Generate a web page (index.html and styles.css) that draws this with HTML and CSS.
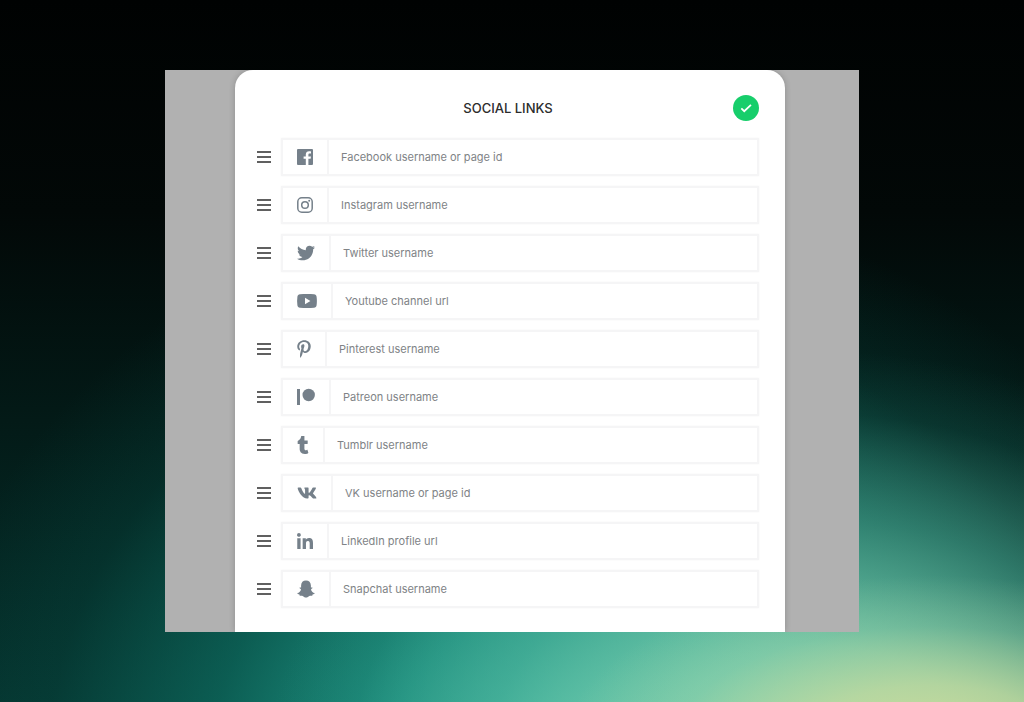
FILE: index.html
```html
<!DOCTYPE html>
<html lang="en">
  <head>
    <meta charset="UTF-8" />
    <meta name="viewport" content="width=device-width, initial-scale=1" />
    <title>Social Links</title>
    <link rel="stylesheet" href="styles.css">
  </head>
  <body>
    <main class="stage">
      <form class="card">
        <header class="card-header">
          <h1>SOCIAL LINKS</h1>
          <button type="submit" class="save" aria-label="Save">
            <svg viewBox="0 0 24 24"><path d="M4 12.500l5 5L20.500 6.500" /></svg>
          </button>
        </header>

        <ul class="links">
          <li class="link">
            <button type="button" class="handle" aria-label="Reorder"><span></span></button>
            <div class="field">
              <label for="facebook" aria-label="Facebook">
                <svg width="16" height="16" viewBox="0 0 16 16"><path d="M1 0h14a1 1 0 0 1 1 1v14a1 1 0 0 1-1 1h-3.600V9.800h2.200l.4-2.400h-2.600V5.900c0-.8.300-1.300 1.300-1.300H14V2.400c-.3 0-1-.1-1.900-.1-2 0-3.300 1.200-3.300 3.300v1.800H6.600v2.400h2.200V16H1a1 1 0 0 1-1-1V1a1 1 0 0 1 1-1z" /></svg>
              </label>
              <input id="facebook" type="text" placeholder="Facebook username or page id" />
            </div>
          </li>
          <li class="link">
            <button type="button" class="handle" aria-label="Reorder"><span></span></button>
            <div class="field">
              <label for="instagram" aria-label="Instagram">
                <svg width="16" height="16" viewBox="0 0 16 16"><g fill="none" stroke="currentColor" stroke-width="1.500"><rect x=".8" y=".8" width="14.400" height="14.400" rx="4" /><circle cx="8" cy="8" r="3.300" /></g><circle cx="12.200" cy="3.800" r="1" /></svg>
              </label>
              <input id="instagram" type="text" placeholder="Instagram username" />
            </div>
          </li>
          <li class="link">
            <button type="button" class="handle" aria-label="Reorder"><span></span></button>
            <div class="field">
              <label for="twitter" aria-label="Twitter">
                <svg width="18" height="18" viewBox="0 0 512 512"><path d="M459.370 151.716c.325 4.548.325 9.097.325 13.645 0 138.720-105.583 298.558-298.558 298.558-59.452 0-114.680-17.219-161.137-47.106 8.447.974 16.568 1.299 25.340 1.299 49.055 0 94.213-16.568 130.274-44.832-46.132-.975-84.792-31.188-98.112-72.772 6.498.974 12.995 1.624 19.818 1.624 9.421 0 18.843-1.300 27.614-3.573-48.081-9.747-84.143-51.980-84.143-102.985v-1.299c13.969 7.797 30.214 12.670 47.431 13.319-28.264-18.843-46.781-51.005-46.781-87.391 0-19.492 5.197-37.360 14.294-52.954 51.655 63.675 129.300 105.258 216.365 109.807-1.624-7.797-2.599-15.918-2.599-24.040 0-57.828 46.782-104.934 104.934-104.934 30.213 0 57.502 12.670 76.670 33.137 23.715-4.548 46.456-13.320 66.599-25.340-7.798 24.366-24.366 44.833-46.132 57.827 21.117-2.273 41.584-8.122 60.426-16.243-14.292 20.791-32.161 39.308-52.628 54.253z" /></svg>
              </label>
              <input id="twitter" type="text" placeholder="Twitter username" />
            </div>
          </li>
          <li class="link">
            <button type="button" class="handle" aria-label="Reorder"><span></span></button>
            <div class="field">
              <label for="youtube" aria-label="Youtube">
                <svg width="20" height="14" viewBox="0 0 20 14"><path fill-rule="evenodd" d="M3 .3C7 0 13 0 17 .3c1.500.1 2.400 1 2.600 2.400.4 3 .4 5.600 0 8.600-.2 1.400-1.100 2.300-2.600 2.400-4 .3-10 .3-14 0C1.500 13.600.6 12.700.4 11.300 0 8.300 0 5.700.4 2.700.6 1.300 1.500.4 3 .3zM8 3.800v6.400L13.400 7z" /></svg>
              </label>
              <input id="youtube" type="text" placeholder="Youtube channel url" />
            </div>
          </li>
          <li class="link">
            <button type="button" class="handle" aria-label="Reorder"><span></span></button>
            <div class="field">
              <label for="pinterest" aria-label="Pinterest">
                <svg width="14" height="18" viewBox="0 0 384 512"><path d="M204 6.500C101.400 6.500 0 74.900 0 185.600 0 256 39.600 296 63.600 296c9.900 0 15.600-27.600 15.600-35.400 0-9.300-23.700-29.100-23.700-67.800 0-80.400 61.200-137.400 140.400-137.400 68.100 0 118.500 38.700 118.500 109.800 0 53.100-21.300 152.700-90.300 152.700-24.900 0-46.200-18-46.200-43.800 0-37.800 26.400-74.400 26.400-113.400 0-66.200-93.900-54.200-93.900 25.800 0 16.800 2.100 35.400 9.600 50.700-13.800 59.400-42 147.900-42 209.100 0 18.900 2.700 37.500 4.500 56.400 3.400 3.800 1.700 3.400 6.900 1.500 50.400-69 48.600-82.500 71.400-172.800 12.300 23.400 44.100 36 69.300 36 106.200 0 153.900-103.500 153.900-196.800C384 71.300 298.200 6.500 204 6.500z" /></svg>
              </label>
              <input id="pinterest" type="text" placeholder="Pinterest username" />
            </div>
          </li>
          <li class="link">
            <button type="button" class="handle" aria-label="Reorder"><span></span></button>
            <div class="field">
              <label for="patreon" aria-label="Patreon">
                <svg width="18" height="18" viewBox="0 0 18 18"><path d="M0 1h3v16H0z" /><circle cx="11.700" cy="7" r="6.200" /></svg>
              </label>
              <input id="patreon" type="text" placeholder="Patreon username" />
            </div>
          </li>
          <li class="link">
            <button type="button" class="handle" aria-label="Reorder"><span></span></button>
            <div class="field">
              <label for="tumblr" aria-label="Tumblr">
                <svg width="12" height="18" viewBox="0 0 320 512"><path d="M309.800 480.300c-13.600 14.500-50 31.700-97.400 31.700-120.800 0-147-88.800-147-140.600v-144H17.900c-5.500 0-10-4.500-10-10v-68c0-7.200 4.500-13.600 11.300-16 62-21.800 81.500-76 84.300-117.100.8-11 6.500-16.300 16.100-16.300h70.900c5.500 0 10 4.500 10 10v115.200h83c5.500 0 10 4.400 10 9.900v81.700c0 5.500-4.500 10-10 10h-83.400V360c0 34.200 23.700 53.600 68 35.800 4.800-1.900 9-3.200 12.700-2.200 3.500.9 5.800 3.400 7.400 7.900l22 64.300c1.800 5 3.300 10.600-.4 14.500z" /></svg>
              </label>
              <input id="tumblr" type="text" placeholder="Tumblr username" />
            </div>
          </li>
          <li class="link">
            <button type="button" class="handle" aria-label="Reorder"><span></span></button>
            <div class="field">
              <label for="vk" aria-label="VK">
                <svg width="20" height="18" viewBox="0 0 576 512"><path d="M545 117.700c3.700-12.500 0-21.700-17.800-21.700h-58.900c-15 0-21.900 7.900-25.600 16.700 0 0-30 73.100-72.400 120.500-13.700 13.700-20 18.100-27.500 18.100-3.700 0-9.400-4.400-9.400-16.900V117.700c0-15-4.200-21.700-16.600-21.700h-92.600c-9.400 0-15 7-15 13.500 0 14.200 21.200 17.500 23.400 57.500v86.800c0 19-3.400 22.500-10.900 22.500-20 0-68.600-73.400-97.400-157.400-5.800-16.300-11.500-22.900-26.600-22.900H38.800c-16.800 0-20.200 7.900-20.200 16.700 0 15.600 20 93.100 93.100 195.500C160.400 378.100 229 416 291.400 416c37.500 0 42.100-8.400 42.100-22.900 0-66.800-3.400-73.100 15.400-73.100 8.700 0 23.700 4.400 58.700 38.100 40 40 46.600 57.900 69 57.900h58.900c16.800 0 25.300-8.400 20.400-25-11.200-34.900-86.900-106.700-90.300-111.500-8.700-11.200-6.200-16.200 0-26.200.1-.1 72-101.300 79.400-135.600z" /></svg>
              </label>
              <input id="vk" type="text" placeholder="VK username or page id" />
            </div>
          </li>
          <li class="link">
            <button type="button" class="handle" aria-label="Reorder"><span></span></button>
            <div class="field">
              <label for="linkedin" aria-label="LinkedIn">
                <svg width="16" height="16" viewBox="0 0 448 448"><path d="M100.300 448H7.400V148.900h92.900zM53.800 108.100C24.100 108.100 0 83.500 0 53.800a53.800 53.800 0 0 1 107.600 0c0 29.700-24.100 54.300-53.800 54.300zM447.900 448h-92.700V302.400c0-34.700-.7-79.200-48.300-79.200-48.300 0-55.700 37.700-55.700 76.700V448h-92.800V148.900h89.100v40.800h1.300c12.400-23.500 42.700-48.300 87.900-48.300 94 0 111.300 61.900 111.300 142.300V448z" /></svg>
              </label>
              <input id="linkedin" type="text" placeholder="LinkedIn profile url" />
            </div>
          </li>
          <li class="link">
            <button type="button" class="handle" aria-label="Reorder"><span></span></button>
            <div class="field">
              <label for="snapchat" aria-label="Snapchat">
                <svg width="18" height="18" viewBox="0 0 18 18"><path d="M9 .5c3 0 4.900 2 4.900 4.900v2c.5.300 1.300-.4 1.600.3.200.7-1.300 1-1.500 1.700.4 1.900 1.700 3.100 3.600 3.700.3.900-1 1.200-2 1.400-.3.400 0 1-.5 1.200-.9.200-1.700-.2-2.700.2-1.100.6-1.900 1.600-3.400 1.600s-2.300-1-3.400-1.600c-1-.4-1.800 0-2.700-.2-.5-.2-.2-.8-.5-1.200-1-.2-2.300-.5-2-1.400C2.300 12.500 3.600 11.300 4 9.400 3.800 8.700 2.300 8.400 2.500 7.700c.3-.7 1.100 0 1.600-.3v-2C4.100 2.500 6 .5 9 .5z" /></svg>
              </label>
              <input id="snapchat" type="text" placeholder="Snapchat username" />
            </div>
          </li>
        </ul>
      </form>
    </main>
  </body>
</html>
```
FILE: styles.css
```css
* {
  box-sizing: border-box;
}

body {
  margin: 0;
  min-height: 100vh;
  padding: 70px 165px;
  font-family: Inter, "Liberation Sans", sans-serif;
  background:
    radial-gradient(ellipse 36% 24% at 91% 106%, #cfdc9c 0%, rgba(196, 218, 158, 0.8) 35%, rgba(160, 210, 165, 0.3) 70%, rgba(140, 205, 170, 0) 100%),
    radial-gradient(ellipse 54% 60% at 80% 110%, #8fdab8 0%, rgba(125, 208, 176, 0.85) 30%, rgba(85, 180, 155, 0.5) 60%, rgba(40, 130, 112, 0.15) 85%, rgba(20, 100, 88, 0) 100%),
    radial-gradient(ellipse 64% 80% at 56% 108%, #45c0aa 0%, rgba(36, 165, 146, 0.85) 28%, rgba(16, 122, 108, 0.6) 55%, rgba(8, 90, 80, 0.22) 80%, rgba(4, 60, 54, 0) 100%),
    linear-gradient(to bottom, #000202 0%, #020807 30%, #031a17 60%, #05332e 100%);
}

.stage {
  padding: 0 74px 0 70px;
  background: #b1b1b1;
  overflow: hidden;
}

.card {
  padding: 25px 26px 24px 22px;
  background: #fff;
  border-radius: 18px 18px 0 0;
  box-shadow: 0 0 6px rgba(0, 0, 0, 0.2);
}

.card-header {
  display: grid;
  grid-template-columns: 1fr auto 1fr;
  align-items: center;
  margin-bottom: 17px;
}

h1 {
  grid-column: 2;
  margin: 0;
  font-size: 13px;
  font-weight: 500;
  color: #2c2c2c;
}

.save {
  justify-self: end;
  width: 26px;
  height: 26px;
  padding: 6px;
  border: none;
  border-radius: 50%;
  background: #17ce6b;
  cursor: pointer;
}

.save svg {
  display: block;
  fill: none;
  stroke: #fff;
  stroke-width: 3;
}

.links {
  display: grid;
  gap: 10px;
  margin: 0;
  padding: 0;
  list-style: none;
}

.link {
  display: flex;
  align-items: center;
  gap: 10px;
}

.handle {
  padding: 0;
  border: none;
  background: none;
  cursor: grab;
}

.handle span {
  display: block;
  width: 14px;
  height: 12px;
  border-top: 2px solid #606060;
  border-bottom: 2px solid #606060;
  background: linear-gradient(#606060, #606060) center / 100% 2px no-repeat;
}

.field {
  flex: 1;
  display: flex;
  height: 38px;
  border: 2px solid #f5f5f6;
  box-shadow: 0 0 2px rgba(0, 0, 0, 0.04);
}

.field label {
  display: flex;
  align-items: center;
  padding: 0 14px;
  border-right: 2px solid #f5f5f6;
  color: #75808a;
}

.field svg {
  display: block;
  fill: currentColor;
}

.field input {
  flex: 1;
  min-width: 0;
  padding: 0 12px;
  border: none;
  outline: none;
  background: none;
  font: inherit;
  font-size: 11px;
  color: #555;
}

.field input::placeholder {
  color: #808386;
  opacity: 1;
}
```
